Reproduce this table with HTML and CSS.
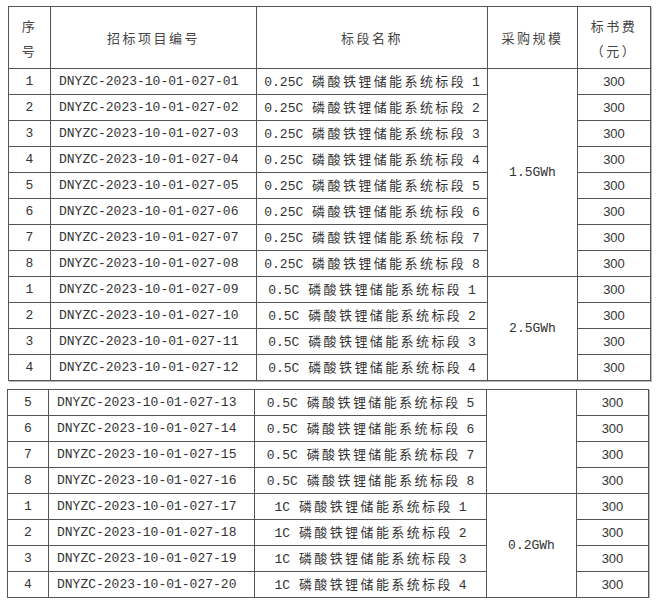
FILE: index.html
```html
<!DOCTYPE html>
<html lang="zh">
<head>
<meta charset="utf-8">
<link rel="stylesheet" href="styles.css">
</head>
<body>
<div class="page">
<table class="grid first">
<colgroup><col class="c1"><col class="c2"><col class="c3"><col class="c4"><col class="c5"></colgroup>
<thead>
<tr class="head"><th>序<br>号</th><th>招标项目编号</th><th>标段名称</th><th>采购规模</th><th>标书费<br>（元）</th></tr>
</thead>
<tbody>
<tr><td class="no">1</td><td class="code">DNYZC-2023-10-01-027-01</td><td class="name"><span class="lat">0.25C</span> <span class="cjk">磷酸铁锂储能系统标段</span> 1</td><td class="scale" rowspan="8">1.5GWh</td><td class="fee">300</td></tr>
<tr><td class="no">2</td><td class="code">DNYZC-2023-10-01-027-02</td><td class="name"><span class="lat">0.25C</span> <span class="cjk">磷酸铁锂储能系统标段</span> 2</td><td class="fee">300</td></tr>
<tr><td class="no">3</td><td class="code">DNYZC-2023-10-01-027-03</td><td class="name"><span class="lat">0.25C</span> <span class="cjk">磷酸铁锂储能系统标段</span> 3</td><td class="fee">300</td></tr>
<tr><td class="no">4</td><td class="code">DNYZC-2023-10-01-027-04</td><td class="name"><span class="lat">0.25C</span> <span class="cjk">磷酸铁锂储能系统标段</span> 4</td><td class="fee">300</td></tr>
<tr><td class="no">5</td><td class="code">DNYZC-2023-10-01-027-05</td><td class="name"><span class="lat">0.25C</span> <span class="cjk">磷酸铁锂储能系统标段</span> 5</td><td class="fee">300</td></tr>
<tr><td class="no">6</td><td class="code">DNYZC-2023-10-01-027-06</td><td class="name"><span class="lat">0.25C</span> <span class="cjk">磷酸铁锂储能系统标段</span> 6</td><td class="fee">300</td></tr>
<tr><td class="no">7</td><td class="code">DNYZC-2023-10-01-027-07</td><td class="name"><span class="lat">0.25C</span> <span class="cjk">磷酸铁锂储能系统标段</span> 7</td><td class="fee">300</td></tr>
<tr><td class="no">8</td><td class="code">DNYZC-2023-10-01-027-08</td><td class="name"><span class="lat">0.25C</span> <span class="cjk">磷酸铁锂储能系统标段</span> 8</td><td class="fee">300</td></tr>
<tr><td class="no">1</td><td class="code">DNYZC-2023-10-01-027-09</td><td class="name"><span class="lat">0.5C</span> <span class="cjk">磷酸铁锂储能系统标段</span> 1</td><td class="scale" rowspan="4">2.5GWh</td><td class="fee">300</td></tr>
<tr><td class="no">2</td><td class="code">DNYZC-2023-10-01-027-10</td><td class="name"><span class="lat">0.5C</span> <span class="cjk">磷酸铁锂储能系统标段</span> 2</td><td class="fee">300</td></tr>
<tr><td class="no">3</td><td class="code">DNYZC-2023-10-01-027-11</td><td class="name"><span class="lat">0.5C</span> <span class="cjk">磷酸铁锂储能系统标段</span> 3</td><td class="fee">300</td></tr>
<tr><td class="no">4</td><td class="code">DNYZC-2023-10-01-027-12</td><td class="name"><span class="lat">0.5C</span> <span class="cjk">磷酸铁锂储能系统标段</span> 4</td><td class="fee">300</td></tr>
</tbody>
</table>
<table class="grid second">
<colgroup><col class="d1"><col class="d2"><col class="d3"><col class="d4"><col class="d5"></colgroup>
<tbody>
<tr><td class="no">5</td><td class="code">DNYZC-2023-10-01-027-13</td><td class="name"><span class="lat">0.5C</span> <span class="cjk">磷酸铁锂储能系统标段</span> 5</td><td class="scale" rowspan="4"></td><td class="fee">300</td></tr>
<tr><td class="no">6</td><td class="code">DNYZC-2023-10-01-027-14</td><td class="name"><span class="lat">0.5C</span> <span class="cjk">磷酸铁锂储能系统标段</span> 6</td><td class="fee">300</td></tr>
<tr><td class="no">7</td><td class="code">DNYZC-2023-10-01-027-15</td><td class="name"><span class="lat">0.5C</span> <span class="cjk">磷酸铁锂储能系统标段</span> 7</td><td class="fee">300</td></tr>
<tr><td class="no">8</td><td class="code">DNYZC-2023-10-01-027-16</td><td class="name"><span class="lat">0.5C</span> <span class="cjk">磷酸铁锂储能系统标段</span> 8</td><td class="fee">300</td></tr>
<tr><td class="no">1</td><td class="code">DNYZC-2023-10-01-027-17</td><td class="name"><span class="lat">1C</span> <span class="cjk">磷酸铁锂储能系统标段</span> 1</td><td class="scale" rowspan="4">0.2GWh</td><td class="fee">300</td></tr>
<tr><td class="no">2</td><td class="code">DNYZC-2023-10-01-027-18</td><td class="name"><span class="lat">1C</span> <span class="cjk">磷酸铁锂储能系统标段</span> 2</td><td class="fee">300</td></tr>
<tr><td class="no">3</td><td class="code">DNYZC-2023-10-01-027-19</td><td class="name"><span class="lat">1C</span> <span class="cjk">磷酸铁锂储能系统标段</span> 3</td><td class="fee">300</td></tr>
<tr><td class="no">4</td><td class="code">DNYZC-2023-10-01-027-20</td><td class="name"><span class="lat">1C</span> <span class="cjk">磷酸铁锂储能系统标段</span> 4</td><td class="fee">300</td></tr>
</tbody>
</table>
</div>
</body>
</html>
```
FILE: styles.css
```css
html, body {
  margin: 0;
  padding: 0;
  background: #ffffff;
}
.page {
  display: flex;
  flex-direction: column;
  align-items: flex-start;
  padding: 6px 0 0 8px;
  gap: 8px;
  font-family: "Liberation Mono", "Noto Sans CJK SC", monospace;
  color: #333333;
}
.grid {
  border-collapse: collapse;
  table-layout: fixed;
  border: 1px solid #555555;
  box-shadow: 1px 1px 0 #b8b8b8;
}
.second {
  margin-left: -1px;
}
.c1 { width: 42px; }
.c2 { width: 206px; }
.c3 { width: 231px; }
.c4 { width: 90px; }
.c5 { width: 73px; }
.d1 { width: 41px; }
.d2 { width: 206px; }
.d3 { width: 232px; }
.d4 { width: 90px; }
.d5 { width: 72px; }
.grid th, .grid td {
  border: 1px solid #555555;
  padding: 0;
  height: 25px;
  vertical-align: middle;
  font-size: 13px;
  line-height: 16px;
  white-space: nowrap;
  overflow: hidden;
}
.grid th {
  height: 61px;
  font-weight: normal;
  font-family: "Noto Sans CJK SC", sans-serif;
  font-size: 13px;
  line-height: 25px;
  letter-spacing: 2.5px;
  color: #444444;
  text-align: center;
}
.no {
  text-align: center;
}
.code {
  text-align: left;
  padding-left: 8px !important;
}
.name {
  text-align: center;
  word-spacing: -2px;
  font-family: "Liberation Mono", "Noto Sans CJK SC", monospace;
}
.name .lat {
  margin-right: 3px;
}
.name .cjk {
  letter-spacing: 2.4px;
  font-family: "Noto Sans CJK SC", sans-serif;
}
.scale {
  text-align: center;
}
.fee {
  text-align: center;
  font-family: "Liberation Sans", sans-serif;
}
```
